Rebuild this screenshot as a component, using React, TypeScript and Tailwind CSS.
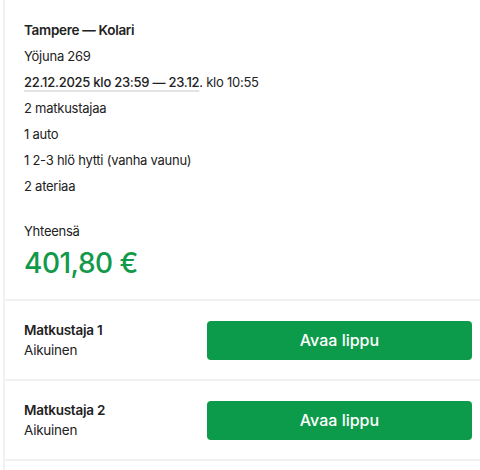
export default function App() {
  const passengers = [
    { name: "Matkustaja 1", type: "Aikuinen" },
    { name: "Matkustaja 2", type: "Aikuinen" },
  ];

  return (
    <div className="h-[470px] w-[480px] overflow-hidden bg-white font-['Inter','Liberation_Sans',sans-serif] text-[#222]">
      <div className="ml-[3px] h-full border-l-2 border-[#f1f1f1]">
        {/* Trip summary */}
        <div className="pl-[19px] pt-[17px] pb-[18px] text-[13px] leading-[26px] tracking-[-0.25px]">
          <div className="text-[13.5px] font-semibold tracking-[-0.3px]">Tampere — Kolari</div>
          <div>Yöjuna 269</div>
          <div>
            <span className="font-medium underline decoration-[#e4e4e4] decoration-2 underline-offset-[3px]">
              22.12.2025 klo 23:59 — 23.12
            </span>
            . klo 10:55
          </div>
          <div>2 matkustajaa</div>
          <div>1 auto</div>
          <div>1 2-3 hlö hytti (vanha vaunu)</div>
          <div>2 ateriaa</div>

          <div className="mt-[19px]">Yhteensä</div>
          <div className="mt-[1px] text-[28px] leading-[36px] font-medium tracking-[-0.5px] text-[#12994a]">401,80 €</div>
        </div>

        {/* Passengers */}
        {passengers.map((p) => (
          <div
            key={p.name}
            className="flex h-[80px] items-center border-t-2 border-[#f1f1f1] pl-[19px] pr-[8px]"
          >
            <div className="flex-1 text-[13.5px] leading-[20px] tracking-[-0.25px]">
              <div className="font-semibold">{p.name}</div>
              <div>{p.type}</div>
            </div>
            <button className="h-[39px] w-[265px] rounded-[4px] bg-[#0c9b4a] text-[16px] font-medium text-white">
              Avaa lippu
            </button>
          </div>
        ))}
        <div className="border-t-2 border-[#f1f1f1]" />
      </div>
    </div>
  );
}
